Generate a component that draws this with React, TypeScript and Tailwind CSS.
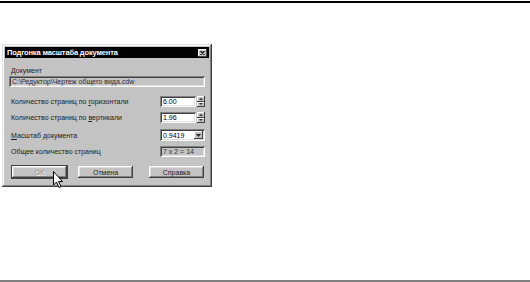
const bevel =
  "shadow-[inset_-1px_-1px_0_#404040,inset_1px_1px_0_#ffffff,inset_-2px_-2px_0_#808080,inset_2px_2px_0_#dfdfdf]";
const sunken =
  "shadow-[inset_1px_1px_0_#808080,inset_-1px_-1px_0_#ffffff,inset_2px_2px_0_#404040,inset_-2px_-2px_0_#dfdfdf]";
const thinBtn = "shadow-[inset_-1px_-1px_0_#404040,inset_1px_1px_0_#ffffff]";

function Label({ children }: { children: React.ReactNode }) {
  return <span className="pl-[2px] text-[7px] leading-none text-[#222]">{children}</span>;
}

function Spinner() {
  return (
    <div className="ml-px flex h-[11px] w-[8px] flex-col">
      <div className={`flex h-[5.5px] items-center justify-center bg-[#c3c3c3] ${thinBtn}`}>
        <svg width="4" height="2" viewBox="0 0 4 2">
          <path d="M0 2 L2 0 L4 2 Z" fill="#333" />
        </svg>
      </div>
      <div className={`flex h-[5.5px] items-center justify-center bg-[#c3c3c3] ${thinBtn}`}>
        <svg width="4" height="2" viewBox="0 0 4 2">
          <path d="M0 0 L2 2 L4 0 Z" fill="#333" />
        </svg>
      </div>
    </div>
  );
}

function Button({ children, disabled, def }: { children: string; disabled?: boolean; def?: boolean }) {
  return (
    <div
      className={`flex h-[12px] w-[55px] items-center justify-center bg-[#c3c3c3] text-[7px] leading-none ${
        def ? "outline outline-1 outline-[#404040]" : ""
      } ${bevel} ${disabled ? "text-[#8a8a8a] [text-shadow:1px_1px_0_#ffffff]" : "text-[#222]"}`}
    >
      {children}
    </div>
  );
}

export default function App() {
  return (
    <div className="flex h-[282px] w-[530px] flex-col bg-white [font-family:'Liberation_Sans',Arial,sans-serif]">
      <div className="mt-px h-[2px] bg-black" />
      <div className="relative ml-[2px] mt-[41px] flex h-[143px] w-[210px] flex-col bg-[#c3c3c3] p-[3px] shadow-[inset_-1px_-1px_0_#404040,inset_1px_1px_0_#dfdfdf,inset_-2px_-2px_0_#808080,inset_2px_2px_0_#ffffff]">
        {/* title bar */}
        <div className="flex h-[11px] items-center justify-between bg-black pl-[2px] pr-[2px]">
          <span className="text-[7.5px] font-bold leading-none tracking-[-0.15px] text-white">
            Подгонка масштаба документа
          </span>
          <div className={`flex h-[8px] w-[9px] items-center justify-center bg-[#c3c3c3] ${thinBtn}`}>
            <svg width="5" height="4" viewBox="0 0 5 4">
              <path d="M0.5 0 L4.5 4 M4.5 0 L0.5 4" stroke="#111" strokeWidth="1.2" />
            </svg>
          </div>
        </div>

        <div className="flex flex-col px-[4px]">
          <div className="mt-[8px] flex h-[9px] items-center">
            <Label>Документ</Label>
          </div>
          <div
            className={`mt-px flex h-[11px] items-center bg-[#c3c3c3] px-[3px] text-[7px] leading-none text-[#303030] ${sunken}`}
          >
            C:\Редуктор\Чертеж общего вида.cdw
          </div>

          <div className="mt-[9px] flex h-[11px] items-center justify-between">
            <Label>
              Количество страниц по <span className="underline">г</span>оризонтали
            </Label>
            <div className="flex items-center">
              <div className={`flex h-[11px] w-[36px] items-center bg-white px-[3px] text-[7px] leading-none ${sunken}`}>
                6.00
              </div>
              <Spinner />
            </div>
          </div>

          <div className="mt-[5px] flex h-[11px] items-center justify-between">
            <Label>
              Количество страниц по <span className="underline">в</span>ертикали
            </Label>
            <div className="flex items-center">
              <div className={`flex h-[11px] w-[36px] items-center bg-white px-[3px] text-[7px] leading-none ${sunken}`}>
                1.96
              </div>
              <Spinner />
            </div>
          </div>

          <div className="mt-[6px] flex h-[12px] items-center justify-between">
            <Label>
              <span className="underline">М</span>асштаб документа
            </Label>
            <div
              className={`flex h-[12px] w-[45px] items-center justify-between bg-white pl-[3px] pr-[2px] text-[7px] leading-none ${sunken}`}
            >
              <span>0.9419</span>
              <div className={`flex h-[8px] w-[9px] items-center justify-center bg-[#c3c3c3] ${thinBtn}`}>
                <svg width="5" height="3" viewBox="0 0 5 3">
                  <path d="M0 0 L2.5 3 L5 0 Z" fill="#222" />
                </svg>
              </div>
            </div>
          </div>

          <div className="mt-[5px] flex h-[11px] items-center justify-between">
            <Label>Общее количество страниц</Label>
            <div
              className={`flex h-[11px] w-[45px] items-center bg-[#c3c3c3] px-[3px] text-[7px] leading-none text-[#303030] ${sunken}`}
            >
              7 x 2 = 14
            </div>
          </div>

          <div className="mt-[9px] flex items-center pl-[3px]">
            <Button disabled def>
              OK
            </Button>
            <div className="ml-[11px]">
              <Button>Отмена</Button>
            </div>
            <div className="ml-[16px]">
              <Button>Справка</Button>
            </div>
          </div>
        </div>

        {/* mouse cursor */}
        <svg className="absolute left-[51px] top-[127px]" width="11" height="18" viewBox="0 0 11 18">
          <path
            d="M0.5 0.5 L0.5 14 L3.5 11 L6 16.5 L8 15.5 L5.5 10.5 L9.5 10.5 Z"
            fill="white"
            stroke="black"
            strokeWidth="1"
            strokeLinejoin="miter"
          />
        </svg>
      </div>
      <div className="flex-1" />
      <div className="h-[2px] bg-[#808080]" />
    </div>
  );
}
